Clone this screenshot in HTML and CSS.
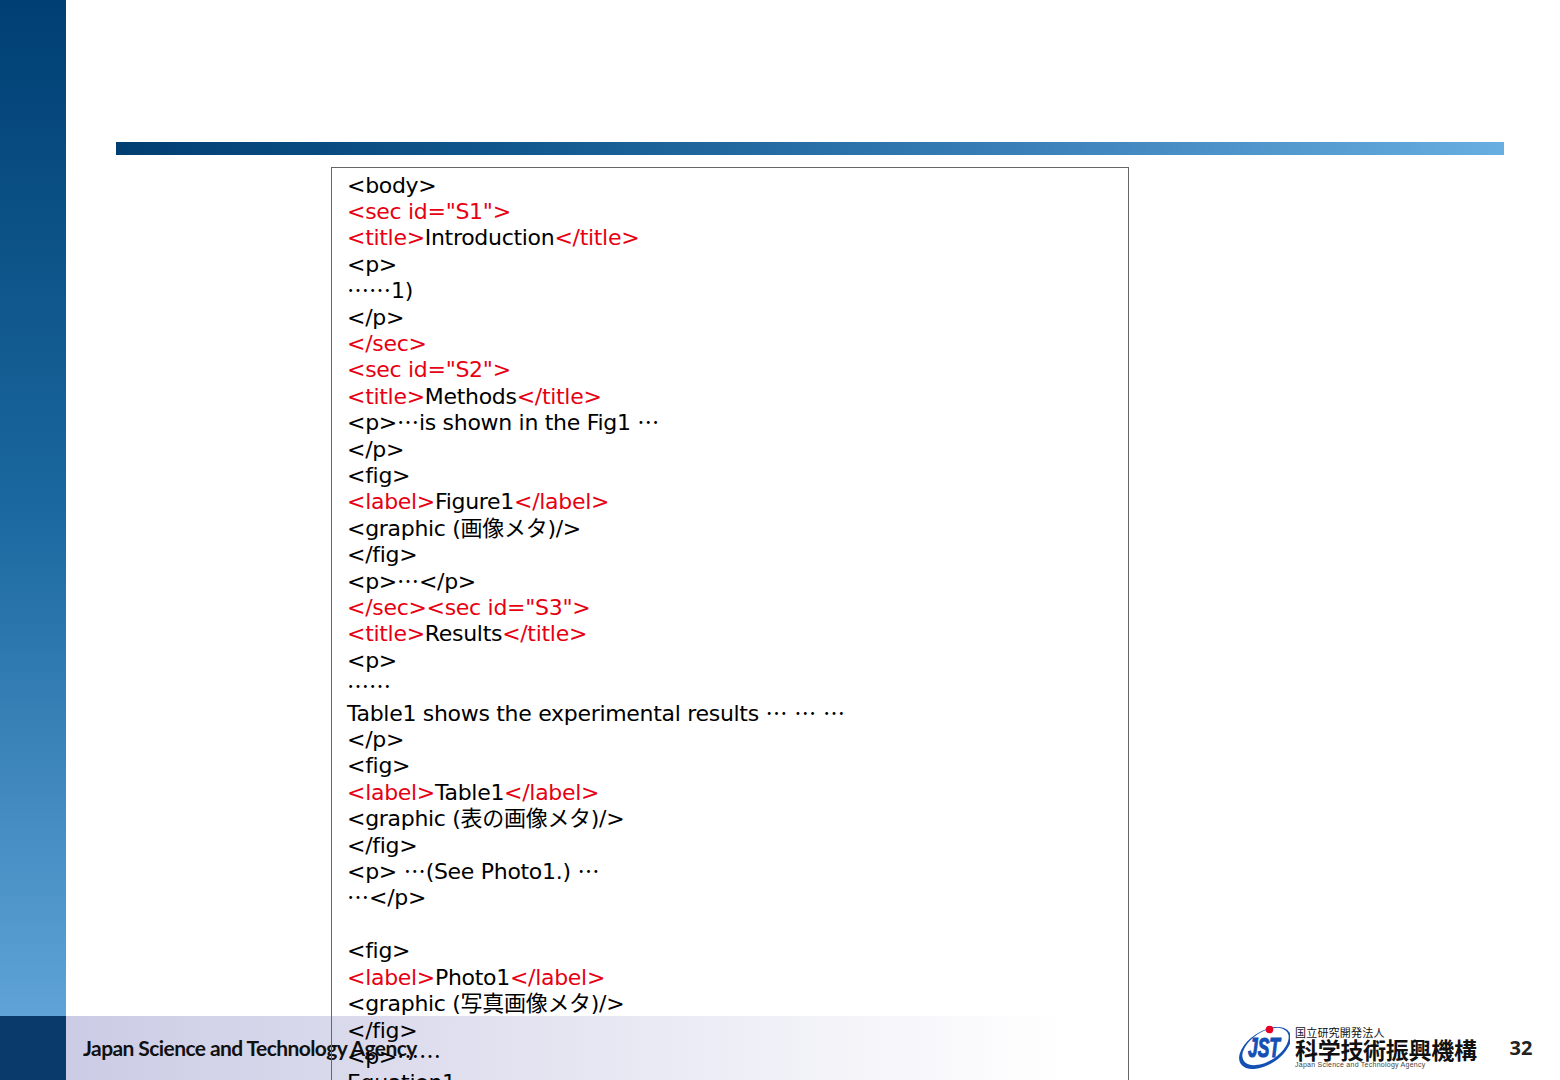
FILE: index.html
```html
<!DOCTYPE html>
<html lang="ja">
<head>
<meta charset="utf-8">
<title>XML</title>
<link rel="stylesheet" href="styles.css">
</head>
<body>
<div class="slide">
	<div class="side"></div>
	<div class="main">
		<div class="rule"></div>
		<div class="code">
			<div>&lt;body&gt;</div>
			<div class="tag">&lt;sec id="S1"&gt;</div>
			<div><span class="tag">&lt;title&gt;</span>Introduction<span class="tag">&lt;/title&gt;</span></div>
			<div>&lt;p&gt;</div>
			<div><span class="dots">……</span>1)</div>
			<div>&lt;/p&gt;</div>
			<div class="tag">&lt;/sec&gt;</div>
			<div class="tag">&lt;sec id="S2"&gt;</div>
			<div><span class="tag">&lt;title&gt;</span>Methods<span class="tag">&lt;/title&gt;</span></div>
			<div>&lt;p&gt;<span class="dots">…</span>is shown in the Fig1 <span class="dots">…</span></div>
			<div>&lt;/p&gt;</div>
			<div>&lt;fig&gt;</div>
			<div><span class="tag">&lt;label&gt;</span>Figure1<span class="tag">&lt;/label&gt;</span></div>
			<div>&lt;graphic (画像メタ)/&gt;</div>
			<div>&lt;/fig&gt;</div>
			<div>&lt;p&gt;<span class="dots">…</span>&lt;/p&gt;</div>
			<div class="tag">&lt;/sec&gt;&lt;sec id="S3"&gt;</div>
			<div><span class="tag">&lt;title&gt;</span>Results<span class="tag">&lt;/title&gt;</span></div>
			<div>&lt;p&gt;</div>
			<div><span class="dots">……</span></div>
			<div>Table1 shows the experimental results <span class="dots">…</span> <span class="dots">…</span> <span class="dots">…</span></div>
			<div>&lt;/p&gt;</div>
			<div>&lt;fig&gt;</div>
			<div><span class="tag">&lt;label&gt;</span>Table1<span class="tag">&lt;/label&gt;</span></div>
			<div>&lt;graphic (表の画像メタ)/&gt;</div>
			<div>&lt;/fig&gt;</div>
			<div>&lt;p&gt; <span class="dots">…</span>(See Photo1.) <span class="dots">…</span></div>
			<div><span class="dots">…</span>&lt;/p&gt;</div>
			<div>&nbsp;</div>
			<div>&lt;fig&gt;</div>
			<div><span class="tag">&lt;label&gt;</span>Photo1<span class="tag">&lt;/label&gt;</span></div>
			<div>&lt;graphic (写真画像メタ)/&gt;</div>
			<div>&lt;/fig&gt;</div>
			<div>&lt;p&gt;<span class="dots">……</span></div>
			<div>Equation1</div>
		</div>
	</div>
	<div class="foot">
		<div class="foot-end"></div>
		<div class="foot-band">Japan Science and Technology Agency</div>
		<div class="jst">
			<svg class="jst-mark" width="52" height="48" viewBox="0 0 52 48">
				<ellipse cx="27" cy="24" rx="29" ry="16.5" transform="rotate(-33 27 24)" fill="#1450b4"/>
				<ellipse cx="27.5" cy="22.5" rx="26" ry="14.5" transform="rotate(-33 27.5 22.5)" fill="#fff"/>
				<circle cx="31.5" cy="5.5" r="3.8" fill="#e60026"/>
				<text class="jst-letters" x="10" y="33" textLength="32" lengthAdjust="spacingAndGlyphs">JST</text>
			</svg>
			<div class="jst-names">
				<div class="jst-top">国立研究開発法人</div>
				<div class="jst-name">科学技術振興機構</div>
				<div class="jst-en">Japan Science and Technology Agency</div>
			</div>
		</div>
		<div class="page-no">32</div>
	</div>
</div>
</body>
</html>
```

FILE: styles.css
```css
*{margin:0;padding:0;box-sizing:border-box;}
html,body{width:1560px;height:1080px;overflow:hidden;background:#fff;}
.slide{position:relative;display:flex;width:1560px;height:1080px;overflow:hidden;font-family:"DejaVu Sans","Noto Sans CJK JP",sans-serif;}
.side{width:66px;height:1016px;background:linear-gradient(180deg,#003f73 0%,#1a689f 50%,#5fa3d8 100%);}
.main{flex:1;padding-top:142px;position:relative;z-index:1;}
.rule{width:1388px;height:13px;margin-left:50px;background:linear-gradient(90deg,#013e72 0%,#12598f 30%,#3a7fb8 65%,#68aee0 100%);}
.code{width:798px;height:1000px;margin:12px 0 0 265px;padding:4.5px 0 0 15px;border:1px solid #666;color:#000;font-size:22px;line-height:26.4px;letter-spacing:-.3px;white-space:nowrap;}
.tag{color:#e60012;}
.dots{font-family:"Noto Sans CJK JP",sans-serif;line-height:0;letter-spacing:0;}
.foot{position:absolute;left:0;bottom:0;display:flex;align-items:center;width:1560px;height:64px;}
.foot-end{width:66px;height:64px;background:#0a3a6b;}
.foot-band{width:1000px;height:64px;padding:20px 0 0 17px;background:linear-gradient(90deg,#cbcbe5 0%,#fff 100%);color:#111;font:bold 21px/24px "Lato",sans-serif;letter-spacing:-.58px;white-space:nowrap;}
.jst{display:flex;align-items:center;gap:5px;margin-left:172px;}
.jst-names{margin-bottom:1px;color:#111;font-family:"Noto Sans CJK JP",sans-serif;white-space:nowrap;}
.jst-top{font-size:11px;line-height:11px;letter-spacing:.2px;}
.jst-name{font-size:23px;line-height:22px;font-weight:700;letter-spacing:-.3px;}
.jst-en{font:7px/9px "Liberation Sans",sans-serif;color:#444;letter-spacing:.25px;}
.jst-letters{font:italic bold 28px "Liberation Sans",sans-serif;fill:#1450b4;stroke:#1450b4;stroke-width:1.2px;}
.page-no{margin-left:33px;color:#222;font:bold 20px/24px "Open Sans",sans-serif;}
```
